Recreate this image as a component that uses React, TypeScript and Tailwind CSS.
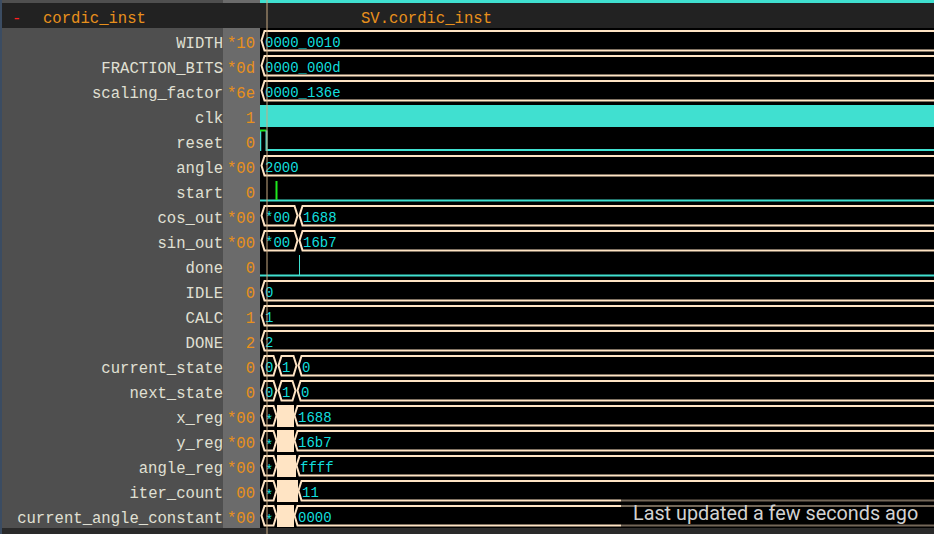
import React from "react";

type Seg = [number, number, string | null];
type Wave =
  | { kind: "bus"; segs: Seg[] }
  | { kind: "clk" }
  | { kind: "reset" }
  | { kind: "start" }
  | { kind: "done" };

type Row = { name: string; val: string; wave: Wave };

const rows: Row[] = [
  { name: "WIDTH", val: "*10", wave: { kind: "bus", segs: [[1, 720, "0000_0010"]] } },
  { name: "FRACTION_BITS", val: "*0d", wave: { kind: "bus", segs: [[1, 720, "0000_000d"]] } },
  { name: "scaling_factor", val: "*6e", wave: { kind: "bus", segs: [[1, 720, "0000_136e"]] } },
  { name: "clk", val: "1", wave: { kind: "clk" } },
  { name: "reset", val: "0", wave: { kind: "reset" } },
  { name: "angle", val: "*00", wave: { kind: "bus", segs: [[1, 720, "2000"]] } },
  { name: "start", val: "0", wave: { kind: "start" } },
  { name: "cos_out", val: "*00", wave: { kind: "bus", segs: [[1, 38, "*00"], [39, 720, "1688"]] } },
  { name: "sin_out", val: "*00", wave: { kind: "bus", segs: [[1, 38, "*00"], [39, 720, "16b7"]] } },
  { name: "done", val: "0", wave: { kind: "done" } },
  { name: "IDLE", val: "0", wave: { kind: "bus", segs: [[1, 720, "0"]] } },
  { name: "CALC", val: "1", wave: { kind: "bus", segs: [[1, 720, "1"]] } },
  { name: "DONE", val: "2", wave: { kind: "bus", segs: [[1, 720, "2"]] } },
  { name: "current_state", val: "0", wave: { kind: "bus", segs: [[1, 17, "0"], [18, 37, "1"], [38, 720, "0"]] } },
  { name: "next_state", val: "0", wave: { kind: "bus", segs: [[1, 17, "0"], [18, 36, "1"], [37, 720, "0"]] } },
  { name: "x_reg", val: "*00", wave: { kind: "bus", segs: [[1, 17, "*"], [17, 34, null], [34, 720, "1688"]] } },
  { name: "y_reg", val: "*00", wave: { kind: "bus", segs: [[1, 17, "*"], [17, 34, null], [34, 720, "16b7"]] } },
  { name: "angle_reg", val: "*00", wave: { kind: "bus", segs: [[1, 17, "*"], [17, 36, null], [36, 720, "ffff"]] } },
  { name: "iter_count", val: "00", wave: { kind: "bus", segs: [[1, 17, "*"], [17, 38, null], [38, 720, "11"]] } },
  { name: "current_angle_constant", val: "*00", wave: { kind: "bus", segs: [[1, 17, "*"], [17, 34, null], [34, 720, "0000"]] } },
];

const TEAL = "#40e0d0";
const PEACH = "#ffe4c4";
const CYAN = "#12dede";

function WaveCell({ wave }: { wave: Wave }) {
  return (
    <svg width="674" height="25" className="block">
      {wave.kind === "clk" && <rect x="0" y="2" width="674" height="22" fill={TEAL} />}
      {wave.kind === "reset" && (
        <>
          <path d="M0.5 3 V23" stroke={TEAL} strokeWidth="1.5" fill="none" />
          <path d="M0 2.5 H6.5" stroke="#1ee81e" strokeWidth="2" fill="none" />
          <path d="M6.5 2.5 V22 H674" stroke={TEAL} strokeWidth="2" fill="none" />
        </>
      )}
      {wave.kind === "start" && (
        <>
          <path d="M0 22.5 H674" stroke={TEAL} strokeWidth="2" />
          <path d="M16.5 3 V22" stroke="#1ee81e" strokeWidth="2" />
        </>
      )}
      {wave.kind === "done" && (
        <>
          <path d="M0 22.5 H674" stroke={TEAL} strokeWidth="2" />
          <path d="M39.5 2 V22" stroke={TEAL} strokeWidth="1" />
        </>
      )}
      {wave.kind === "bus" &&
        wave.segs.map(([a, b, label], i) => {
          if (label === null)
            return <rect key={i} x={a} y="2" width={b - a} height="22" fill={PEACH} />;
          const x0 = a + 0.5;
          const x1 = b - 0.5;
          const pts = `${x0},12.5 ${x0 + 3},3 ${x1 - 3},3 ${x1},12.5 ${x1 - 3},22.5 ${x0 + 3},22.5`;
          return (
            <g key={i}>
              <polygon points={pts} fill="#000" stroke={PEACH} strokeWidth="2" />
              <text
                x={label === "*" ? a + 4 : a + 4}
                y={label === "*" ? 21.5 : 18.5}
                fill={CYAN}
                fontSize="14"
                fontFamily="'Liberation Mono', monospace"
              >
                {label}
              </text>
            </g>
          );
        })}
    </svg>
  );
}

export default function App() {
  return (
    <div className="relative w-[934px] h-[534px] overflow-hidden bg-black border-l-2 border-[#3b4c62] font-['Liberation_Mono',monospace] text-[15.6px]">
      {/* top strip */}
      <div className="flex h-[3px]">
        <div className="w-[221px] bg-[#4f4f4f]" />
        <div className="w-[37px] bg-[#6b6b6b]" />
        <div className="flex-1 bg-[#40e0d0]" />
      </div>

      {/* scope header */}
      <div className="flex h-[25px] bg-[#222222] pt-[6px] leading-[20px]">
        <div className="w-[258px] flex">
          <span className="pl-[10px] w-[41px] text-[#ff2020]">-</span>
          <span className="text-[#e8901c]">cordic_inst</span>
        </div>
        <div className="flex-1 pl-[101px] text-[#e8901c]">SV.cordic_inst</div>
      </div>

      {/* signals */}
      {rows.map((r) => (
        <div key={r.name} className="flex h-[25px]">
          <div className="w-[221px] bg-[#4f4f4f] text-right text-[#e0e0d4] pt-[5px] leading-[22px] whitespace-nowrap">
            {r.name}
          </div>
          <div className="w-[37px] bg-[#6b6b6b] text-right pr-[5px] text-[#e8901c] pt-[5px] leading-[22px]">
            {r.val}
          </div>
          <div className="flex-1 overflow-hidden">
            <WaveCell wave={r.wave} />
          </div>
        </div>
      ))}

      <div className="h-[6px] bg-[#2a2a2a]" />

      {/* cursor */}
      <div className="absolute top-0 bottom-0 left-[264px] w-[2px] bg-[rgba(200,170,130,0.5)]" />

      {/* toast */}
      <div className="absolute right-0 bottom-[6px] w-[313px] h-[29px] bg-black/55 flex items-center pl-[12px] font-['Roboto',sans-serif] text-[19.8px] text-[#d2d2d2] whitespace-nowrap">
        Last updated a few seconds ago
      </div>
    </div>
  );
}
